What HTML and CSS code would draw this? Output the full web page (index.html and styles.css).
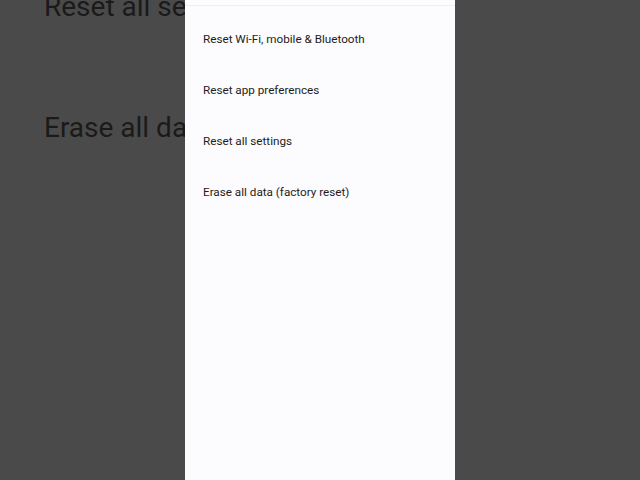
FILE: index.html
```
<!DOCTYPE html>
<html>
<head>
<meta charset="utf-8">
<link rel="stylesheet" href="styles.css">
</head>
<body>
<div class="screen">
  <div class="backdrop">
    <div class="bg-item first">Reset all settings</div>
    <div class="bg-item">Erase all data</div>
  </div>
  <div class="panel">
    <div class="panel-top"></div>
    <ul class="menu">
      <li>Reset Wi-Fi, mobile &amp; Bluetooth</li>
      <li>Reset app preferences</li>
      <li>Reset all settings</li>
      <li>Erase all data (factory reset)</li>
    </ul>
  </div>
</div>
</body>
</html>
```
FILE: styles.css
```
html, body {
  margin: 0;
  padding: 0;
}
body {
  width: 640px;
  height: 480px;
  overflow: hidden;
  background: #4a4a4a;
  font-family: Roboto, "Liberation Sans", sans-serif;
}
.screen {
  position: relative;
  display: flow-root;
  width: 640px;
  height: 480px;
  overflow: hidden;
}
.backdrop {
  display: flow-root;
  padding-left: 44px;
  color: #1a1a1a;
  font-size: 28px;
  white-space: nowrap;
}
.bg-item {
  line-height: 33px;
  margin-top: 88px;
}
.bg-item.first {
  margin-top: -10px;
}
.panel {
  position: absolute;
  left: 185px;
  top: 0;
  width: 270px;
  height: 480px;
  background: #fcfbfe;
}
.panel-top {
  height: 5px;
  border-bottom: 1px solid #efeef1;
}
.menu {
  list-style: none;
  margin: 0;
  padding: 8px 0 0 18px;
}
.menu li {
  font-size: 11.7px;
  line-height: 51px;
  color: #1e1d21;
}
```
